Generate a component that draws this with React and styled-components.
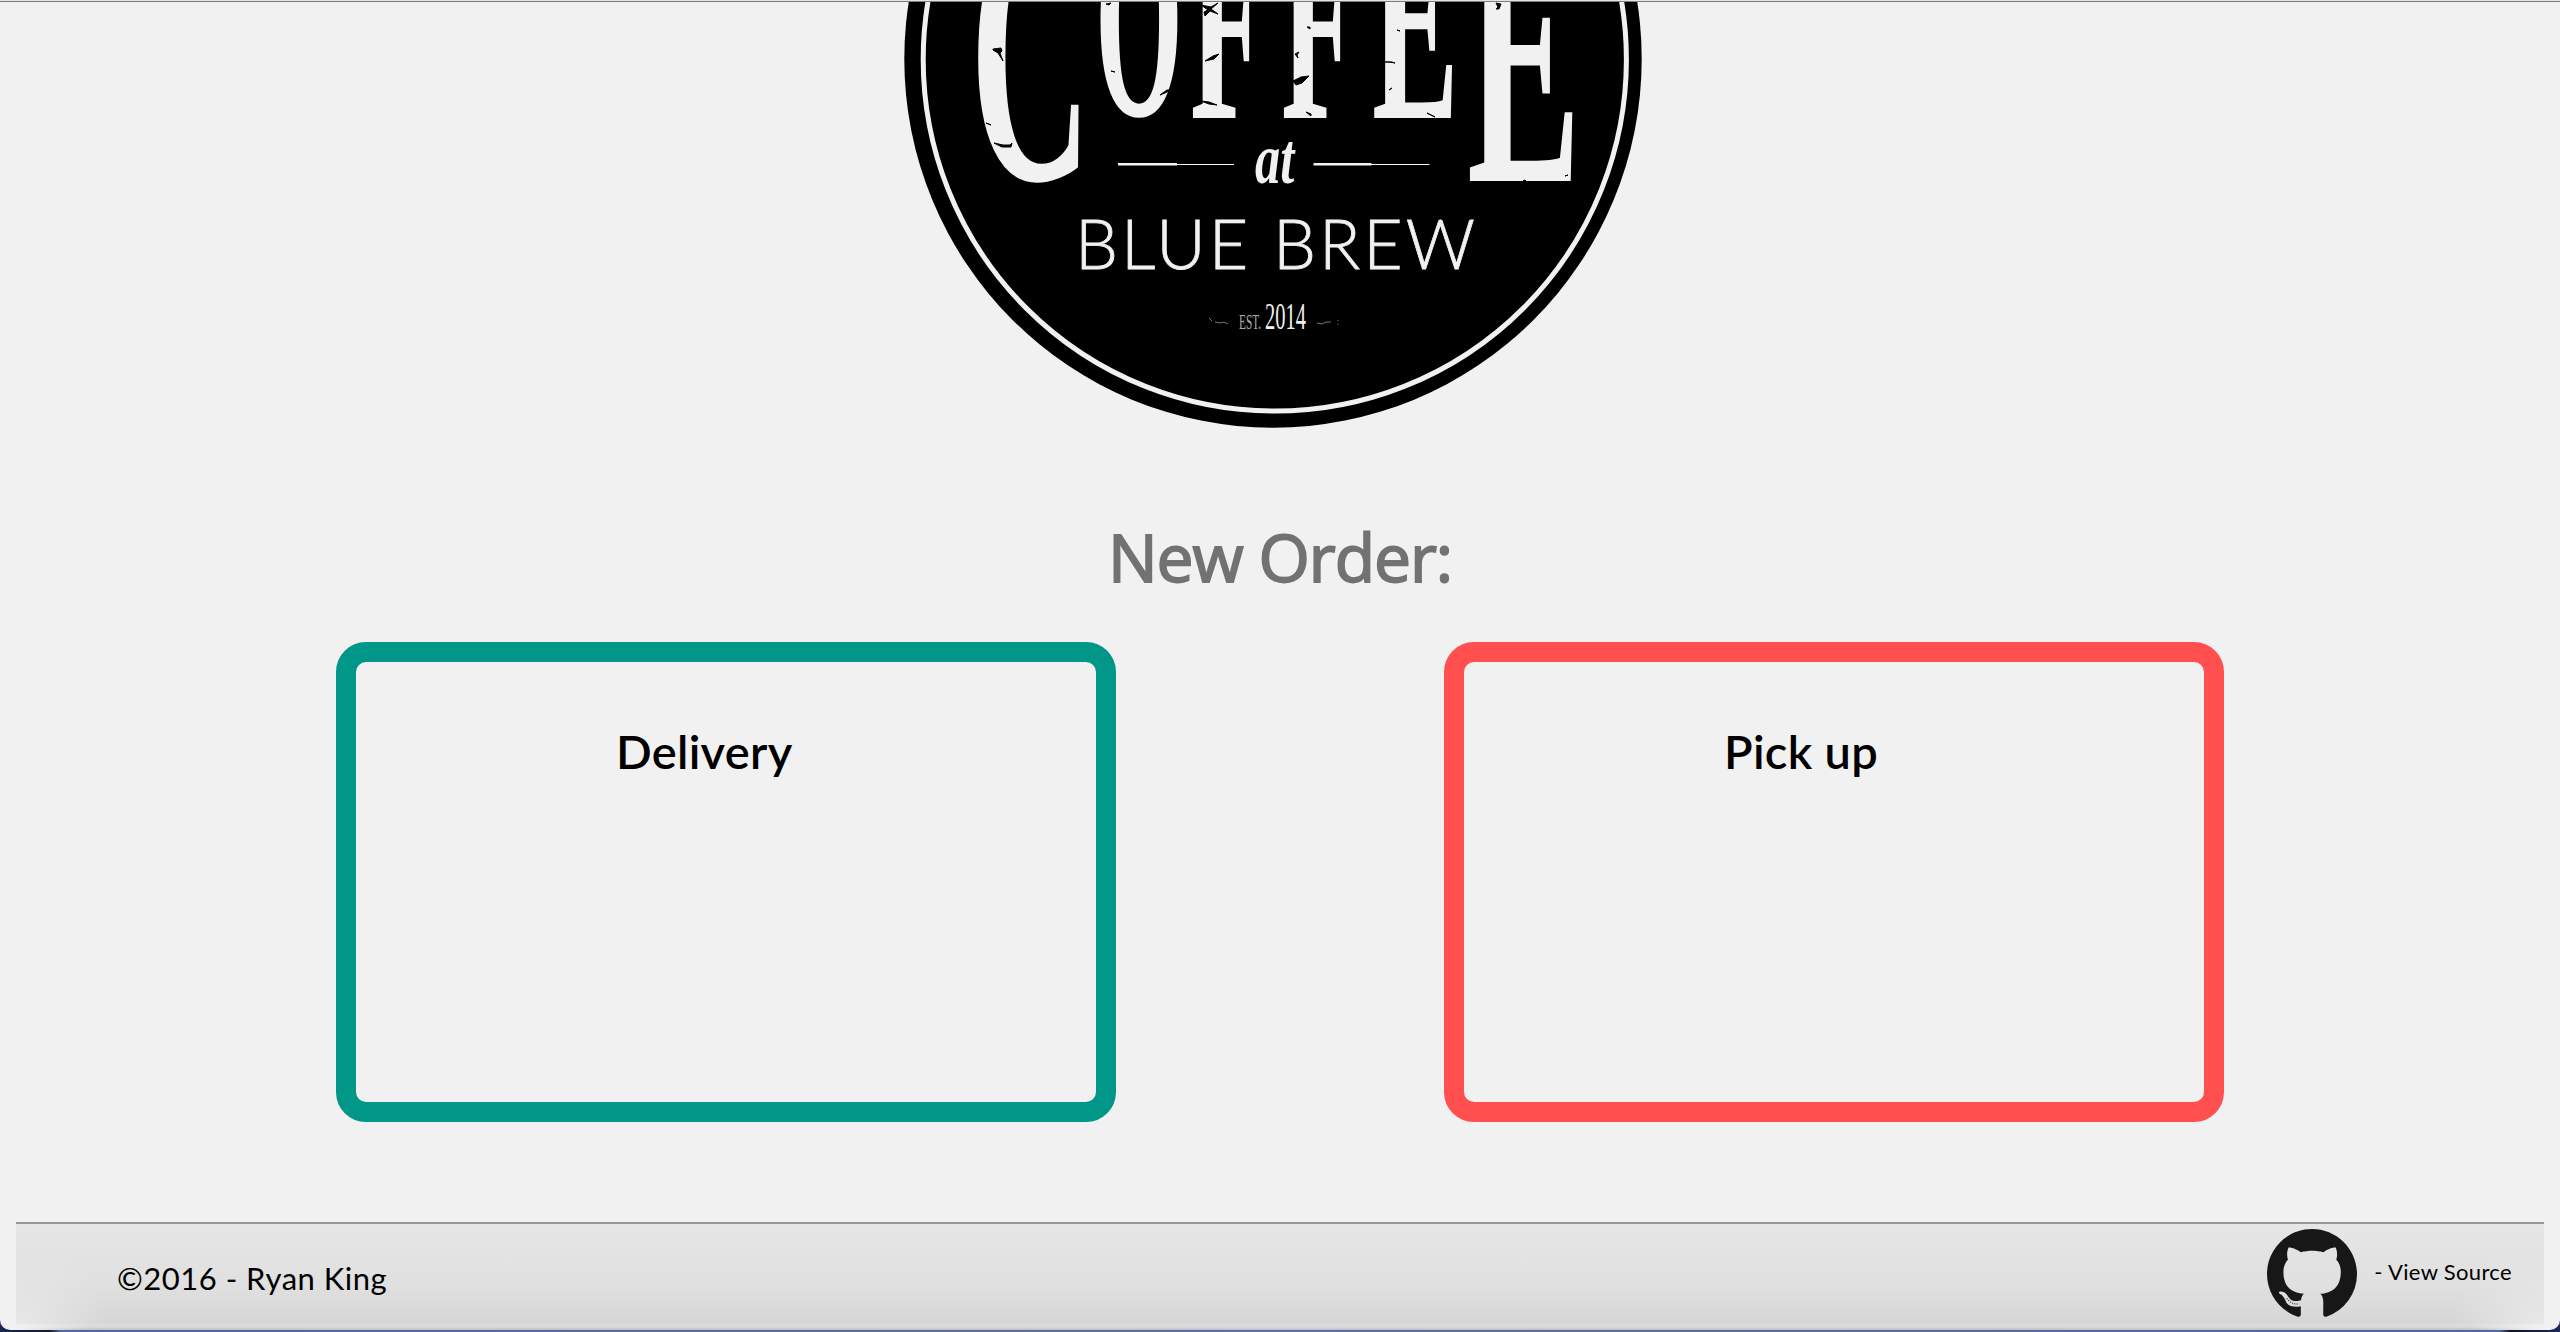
import React from "react";
import styled, { createGlobalStyle } from "styled-components";

const Global = createGlobalStyle`
  * { box-sizing: border-box; }
  html, body { margin: 0; height: 100%; }
  body { background: linear-gradient(90deg, #16264f 0, #141b33 50px, #5068a8 60px, #5c6ea8 50%, #5068a8 2500px, #10142a 2510px, #1a2a55 100%); overflow: hidden; }
`;

const Window = styled.div`
  height: 1330px;
  display: flex;
  flex-direction: column;
  background:
    linear-gradient(90deg, #f1f1f1 20px, rgba(241, 241, 241, 0) 90px, rgba(241, 241, 241, 0) 2470px, #f1f1f1 2540px) bottom / 100% 8px no-repeat,
    linear-gradient(#dedede, #dadada 60%, #bcbcbc) bottom / 100% 7px no-repeat,
    #f1f1f1;
  border-radius: 0 0 10px 10px;
  overflow: hidden;
`;
const TopEdge = styled.div`
  flex: none;
  height: 2px;
  background: #e4e4e4;
  border-bottom: 1px solid #7c7c7c;
`;
const Header = styled.header`
  flex: none;
  height: 426px;
  display: flex;
  justify-content: center;
  padding-right: 14px;
`;
const LogoArt = styled.svg`
  display: block;
  width: 740px;
  height: 426px;
`;
const Title = styled.h1`
  flex: none;
  margin: 0;
  height: 214px;
  padding-top: 83px;
  text-align: center;
  font: 400 66px/90px "Open Sans", sans-serif;
  letter-spacing: -1.1px;
  -webkit-text-stroke: 1.8px #727272;
  color: #727272;
`;
const Orders = styled.main`
  flex: none;
  display: flex;
  justify-content: center;
  gap: 328px;
`;
const OrderCard = styled.button`
  width: 780px;
  height: 480px;
  padding: 56px 0 0 260px;
  display: flex;
  justify-content: flex-start;
  align-items: flex-start;
  border: 20px solid ${(p) => p.$color};
  border-radius: 30px;
  background: transparent;
  color: #000;
  font: 600 47px/66px "Lato", sans-serif;
  letter-spacing: 0.3px;
`;
const Footer = styled.footer`
  flex: none;
  height: 102px;
  margin: 100px 16px 6px;
  display: flex;
  align-items: center;
  justify-content: space-between;
  padding: 0 32px 0 101px;
  border-top: 2px solid #979797;
  background:
    radial-gradient(ellipse 90px 80px at 0 100%, #e8e8e8, rgba(232, 232, 232, 0)),
    radial-gradient(ellipse 90px 80px at 100% 100%, #e8e8e8, rgba(232, 232, 232, 0)),
    linear-gradient(#e6e6e6, #e0e0e0 60%, #d6d6d6);
`;
const Copyright = styled.span`
  font: 400 31px/40px "Lato", sans-serif;
  letter-spacing: 0.5px;
  padding-top: 7px;
`;
const Source = styled.a`
  display: flex;
  align-items: center;
  gap: 17px;
  font: 400 22px/30px "Lato", sans-serif;
  letter-spacing: 0.35px;
  color: #000;
`;
const SourceLabel = styled.span`
  padding-bottom: 5px;
`;
const Mark = styled.svg`
  width: 90px;
  height: 90px;
`;

const letters = [
  { c: "C", x: 970, y: 179, w: 168, h: 377 },
  { c: "O", x: 1095, y: 115, w: 113, h: 290 },
  { c: "F", x: 1190, y: 118, w: 125, h: 290 },
  { c: "F", x: 1281, y: 118, w: 125, h: 290 },
  { c: "E", x: 1372, y: 118, w: 130, h: 290 },
  { c: "E", x: 1467, y: 181, w: 171, h: 377 },
];

function Logo() {
  return (
    <LogoArt viewBox="903 2 740 426">
      <circle cx="1273" cy="59" r="368.7" fill="#000" />
      <circle cx="1274.8" cy="59.5" r="351.6" fill="none" stroke="#f1f1f1" strokeWidth="5" />
      <g fill="#f1f1f1" fontFamily="Liberation Serif, serif" fontWeight="700">
        {letters.map((l, i) => (
          <text key={i} fontSize="100" transform={`translate(${l.x} ${l.y}) scale(${l.w / 100} ${l.h / 100})`}>{l.c}</text>
        ))}
      </g>
      <g fill="#000" stroke="#000" strokeWidth="1">
        <path d="M993 49l8-1 1 3-2 2 3 8-5-8-5-3zM994 143l9 2 7 0 2-2-1 4-9 0zM986 123l5 2z" />
        <path d="M1106 4l5-1-2 2zM1111 71l4 1zM1160 95l7-5 4 0-6 3z" />
        <path d="M1201 5l10 2 7-4-7 6 7 5-8-3-5 5-1-4 4-2zM1205 61l8-5 6-2-5 5zM1201 101l8 1 8 3-8-1z" />
        <path d="M1295 54l4-2-2 3 1 3zM1293 81l8-4 8-1-7 7-6 2zM1306 112l5 2 0 2zM1307 27l3 0 0 2z" />
        <path d="M1384 62l8 0 3 1-6-1zM1389 90l3-2zM1397 30l3 1zM1427 113l8 4z" />
        <path d="M1496 3l5 1-2 5-3 0 2-2zM1480 67l2 2-2 1zM1523 181l2-1 1 1zM1565 176l3-1z" />
      </g>
      <g fill="#f1f1f1">
        <path d="M1118 163h59v1h57v1h-57v.5h-59zM1313.500 163h58v1h58v1h-58v.5h-58z" />
        <text fontFamily="Liberation Serif, serif" fontStyle="italic" fontWeight="700" fontSize="72" transform="translate(1255 183) scale(.7 1)">at</text>
        <text x="1075" y="269" fontFamily="Lato, sans-serif" fontWeight="300" fontSize="68" textLength="400" stroke="#f1f1f1" strokeWidth=".8">BLUE BREW</text>
        <text x="1239" y="329" fontFamily="Liberation Serif, serif" fontSize="21" textLength="22" lengthAdjust="spacingAndGlyphs" opacity=".7">EST.</text>
        <text x="1265" y="329" fontFamily="Liberation Serif, serif" fontSize="38" textLength="41" lengthAdjust="spacingAndGlyphs">2014</text>
      </g>
      <path d="M1209 318l3 3M1215 322l5 1 4-1 4 2M1317 323l5 1 4-2 5 0M1338 320v1M1338 324v1" fill="none" stroke="#aaa" strokeWidth=".7" />
    </LogoArt>
  );
}

export default function App() {
  return (
    <>
      <Global />
      <Window>
        <TopEdge />
        <Header><Logo /></Header>
        <Title>New Order:</Title>
        <Orders>
          <OrderCard $color="#009688">Delivery</OrderCard>
          <OrderCard $color="#ff4f4f">Pick up</OrderCard>
        </Orders>
        <Footer>
          <Copyright>©2016 - Ryan King</Copyright>
          <Source>
            <Mark viewBox="0 0 16 16" fill="#181717">
              <path d="M8 0C3.58 0 0 3.58 0 8c0 3.54 2.29 6.53 5.47 7.59.4.07.55-.17.55-.38 0-.19-.01-.82-.01-1.49-2.01.37-2.53-.49-2.69-.94-.09-.23-.48-.94-.82-1.13-.28-.15-.68-.52-.01-.53.63-.01 1.08.58 1.23.82.72 1.21 1.87.87 2.33.66.07-.52.28-.87.51-1.07-1.78-.2-3.64-.89-3.64-3.95 0-.87.31-1.59.82-2.15-.08-.2-.36-1.02.08-2.12 0 0 .67-.21 2.2.82.64-.18 1.32-.27 2-.27s1.36.09 2 .27c1.53-1.04 2.2-.82 2.2-.82.44 1.1.16 1.92.08 2.12.51.56.82 1.27.82 2.15 0 3.07-1.87 3.75-3.65 3.95.29.25.54.73.54 1.48 0 1.07-.01 1.93-.01 2.2 0 .21.15.46.55.38A8.01 8.01 0 0 0 16 8c0-4.42-3.58-8-8-8z" />
              <path d="M3.500 12.350l.6.6.7.35.9.050" fill="none" stroke="#181717" strokeWidth=".18" strokeDasharray=".2 .22" />
            </Mark>
            <SourceLabel>- View Source</SourceLabel>
          </Source>
        </Footer>
      </Window>
    </>
  );
}
